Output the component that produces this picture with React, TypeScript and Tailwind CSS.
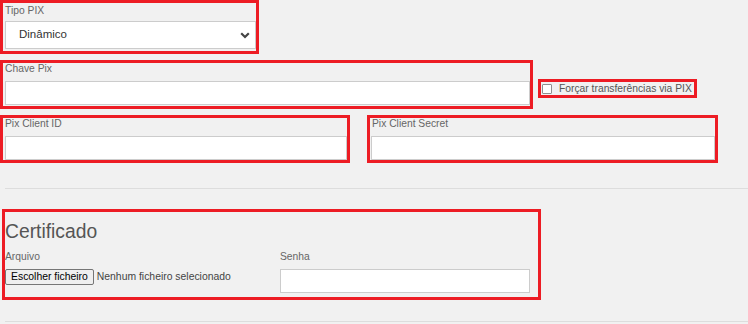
import React from "react";

// Red-outlined annotation box used around each field group
function Box({
  className = "",
  children,
}: {
  className?: string;
  children?: React.ReactNode;
}) {
  return (
    <div className={`border-[3px] border-[#ed1c24] ${className}`}>{children}</div>
  );
}

function Label({ children, className = "" }: { children: React.ReactNode; className?: string }) {
  return (
    <div className={`text-[10.3px] leading-[12px] text-[#666] ${className}`}>{children}</div>
  );
}

function TextInput({ className = "" }: { className?: string }) {
  return (
    <input
      type="text"
      className={`block h-[24px] border border-[#cccccc] bg-white outline-none ${className}`}
    />
  );
}

export default function App() {
  return (
    <div
      className="w-[748px] h-[324px] overflow-hidden bg-[#f1f1f1]"
      style={{ fontFamily: '"Liberation Sans", Arial, sans-serif' }}
    >
      {/* Tipo PIX */}
      <Box className="w-[259px] h-[54px]">
        <Label className="pt-[2px] pl-[2px]">Tipo PIX</Label>
        <div className="ml-[2px] mt-[4px] flex h-[28px] w-[251px] items-center justify-between border border-[#cccccc] bg-white pl-[13px] pr-[5px]">
          <span className="text-[11.5px] text-[#333]">Dinâmico</span>
          <svg width="10" height="7" viewBox="0 0 10 7" className="text-[#444]">
            <path
              d="M1.2 1.2 L5 5 L8.8 1.2"
              fill="none"
              stroke="currentColor"
              strokeWidth="2.2"
            />
          </svg>
        </div>
      </Box>

      {/* Chave Pix + checkbox */}
      <div className="mt-[6px] flex items-start gap-[5px]">
        <Box className="w-[533px] h-[49px]">
          <Label className="pl-[2px]">Chave Pix</Label>
          <TextInput className="ml-[2px] mt-[6px] w-[525px]" />
        </Box>
        <Box className="mt-[19px] flex h-[19px] w-[159px] items-center gap-[7px] pl-[1px]">
          <span className="block h-[10px] w-[10px] rounded-[1px] border border-[#8f8f8f] bg-white" />
          <span className="text-[10.3px] text-[#555]">Forçar transferências via PIX</span>
        </Box>
      </div>

      {/* Client ID / Secret */}
      <div className="mt-[6px] flex gap-[17px]">
        <Box className="w-[350px] h-[48px]">
          <Label className="pl-[2px]">Pix Client ID</Label>
          <TextInput className="ml-[2px] mt-[6px] w-[342px]" />
        </Box>
        <Box className="w-[351px] h-[48px]">
          <Label className="pl-[2px]">Pix Client Secret</Label>
          <TextInput className="ml-[1px] mt-[6px] w-[344px]" />
        </Box>
      </div>

      <div className="ml-[5px] mt-[25px] h-px bg-[#dddddd]" />

      {/* Certificado */}
      <Box className="ml-[2px] mt-[20px] w-[539px] h-[91px]">
        <div className="pt-[9px] text-[19.3px] leading-[22px] text-[#555]">Certificado</div>
        <div className="mt-[8px] flex">
          <div className="w-[275px]">
            <Label>Arquivo</Label>
            <div className="mt-[6px] flex items-center gap-[3px]">
              <span className="rounded-[2px] border border-[#767676] bg-[#efefef] px-[5px] text-[10.4px] leading-[14px] text-black">
                Escolher ficheiro
              </span>
              <span className="text-[10.4px] text-[#444]">Nenhum ficheiro selecionado</span>
            </div>
          </div>
          <div>
            <Label>Senha</Label>
            <TextInput className="mt-[6px] w-[250px]" />
          </div>
        </div>
      </Box>

      <div className="ml-[5px] mt-[21px] h-px bg-[#dddddd]" />
    </div>
  );
}
